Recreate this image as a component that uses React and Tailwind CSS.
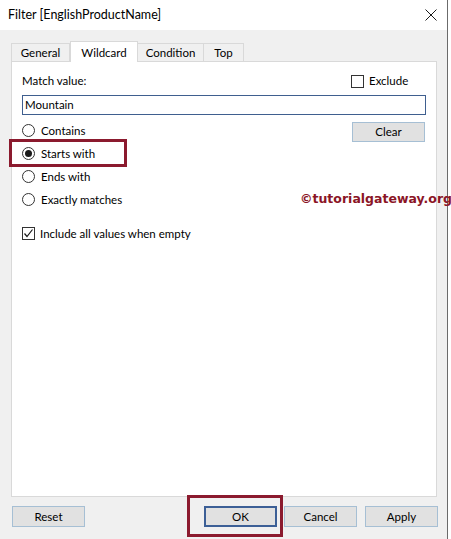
import { useState } from 'react';

const font = { fontFamily: 'Lato, "Noto Sans", "Liberation Sans", sans-serif' };

function Radio({ label, checked, onClick }) {
  return (
    <div className="flex h-[23px] items-center gap-[6px] cursor-default" onClick={onClick}>
      <span className="flex h-[13px] w-[13px] items-center justify-center rounded-full border border-[#333] bg-white">
        {checked && <span className="h-[7px] w-[7px] rounded-full bg-[#1a1a1a]" />}
      </span>
      <span>{label}</span>
    </div>
  );
}

function Button({ children, primary }) {
  return (
    <button
      className={
        'h-[21px] w-[73px] bg-[#e1e1e1] text-[11.5px] text-black ' +
        (primary ? 'border-2 border-[#3c5f96]' : 'border border-[#a6bfd4]')
      }
    >
      {children}
    </button>
  );
}

function Check({ checked }) {
  return (
    <span className="flex h-[13px] w-[13px] items-center justify-center border border-[#333] bg-white">
      {checked && (
        <svg width="11" height="11" viewBox="0 0 11 11">
          <path d="M1.5 5.5 L4 8.5 L9.5 1.5" stroke="#1a1a1a" strokeWidth="1.2" fill="none" />
        </svg>
      )}
    </span>
  );
}

export default function App() {
  const [mode, setMode] = useState('starts');
  const [exclude, setExclude] = useState(false);
  const [includeAll, setIncludeAll] = useState(true);

  const tabs = ['General', 'Wildcard', 'Condition', 'Top'];

  return (
    <div className="relative h-[539px] w-[451px] bg-white text-[11.5px] text-black" style={font}>
      <div className="flex h-[539px] w-[448px] flex-col border-r border-[#6b6b6b]">
        {/* title bar */}
        <div className="flex h-[30px] items-center justify-between bg-white pl-[8px] pr-[9px]">
          <span className="text-[12.5px]">Filter [EnglishProductName]</span>
          <svg width="12" height="12" viewBox="0 0 12 12" className="mr-[1px]">
            <path d="M0.5 0.5 L11.5 11.5 M11.5 0.5 L0.5 11.5" stroke="#1a1a1a" strokeWidth="1" />
          </svg>
        </div>

        {/* body */}
        <div className="flex flex-1 flex-col bg-[#f0f0f0] pl-[11px] pr-[10px] pt-[11px]">
          {/* tabs */}
          <div className="flex h-[20px] items-end">
            {tabs.map((t) => (
              <div
                key={t}
                className={
                  t === 'Wildcard'
                    ? 'relative z-10 -mb-px flex h-[21px] w-[68px] items-start justify-center border border-b-0 border-[#d9d9d9] bg-white pt-[2px]'
                    : 'flex h-[18px] items-center justify-center border border-b-0 border-[#d9d9d9] bg-[#f0f0f0] ' +
                      (t === 'General' ? 'w-[59px]' : t === 'Condition' ? 'w-[67px] -ml-px' : 'w-[41px] -ml-px')
                }
              >
                {t}
              </div>
            ))}
          </div>

          {/* panel */}
          <div className="relative h-[436px] w-[426px] border border-[#d9d9d9] bg-white pl-[10px] pr-[10px]">
            <div className="mt-[12px] flex h-[14px] items-center justify-between">
              <span>Match value:</span>
              <label className="mr-[2px] flex items-center gap-[5px]" onClick={() => setExclude(!exclude)}>
                <Check checked={exclude} />
                <span className="w-[55px]">Exclude</span>
              </label>
            </div>

            <div className="mt-[7px] flex h-[20px] items-center border border-[#3f5f8f] bg-white pl-[2px]">
              Mountain
            </div>

            <div className="flex items-start justify-between">
              <div className="mt-[4px] flex flex-col">
                <Radio label="Contains" checked={mode === 'contains'} onClick={() => setMode('contains')} />
                <div className="relative">
                  <Radio label="Starts with" checked={mode === 'starts'} onClick={() => setMode('starts')} />
                  <div className="pointer-events-none absolute left-[-13px] top-[-3px] h-[28px] w-[118px] border-[3px] border-[#8b1a2e]" />
                </div>
                <Radio label="Ends with" checked={mode === 'ends'} onClick={() => setMode('ends')} />
                <Radio label="Exactly matches" checked={mode === 'exact'} onClick={() => setMode('exact')} />
              </div>
              <button className="mr-[1px] mt-[7px] h-[20px] w-[73px] border border-[#a6bfd4] bg-[#e1e1e1] text-[11.5px]">
                Clear
              </button>
            </div>

            <label className="mt-[14px] flex items-center gap-[5px]" onClick={() => setIncludeAll(!includeAll)}>
              <Check checked={includeAll} />
              <span>Include all values when empty</span>
            </label>
          </div>

          {/* bottom buttons */}
          <div className="mt-[9px] flex items-center">
            <div className="ml-px">
              <Button>Reset</Button>
            </div>
            <div className="relative ml-[119px]">
              <Button primary>OK</Button>
              <div className="pointer-events-none absolute left-[-17px] top-[-11px] h-[42px] w-[96px] border-[3px] border-[#8b1a2e]" />
            </div>
            <div className="ml-[7px]">
              <Button>Cancel</Button>
            </div>
            <div className="ml-[8px]">
              <Button>Apply</Button>
            </div>
          </div>
        </div>
      </div>

      {/* watermark */}
      <div
        className="absolute left-[300px] top-[190px] text-[12.5px] font-bold text-[#8b1526]"
        style={{ fontFamily: '"DejaVu Sans", "Liberation Sans", sans-serif' }}
      >
        ©tutorialgateway.org
      </div>
    </div>
  );
}
